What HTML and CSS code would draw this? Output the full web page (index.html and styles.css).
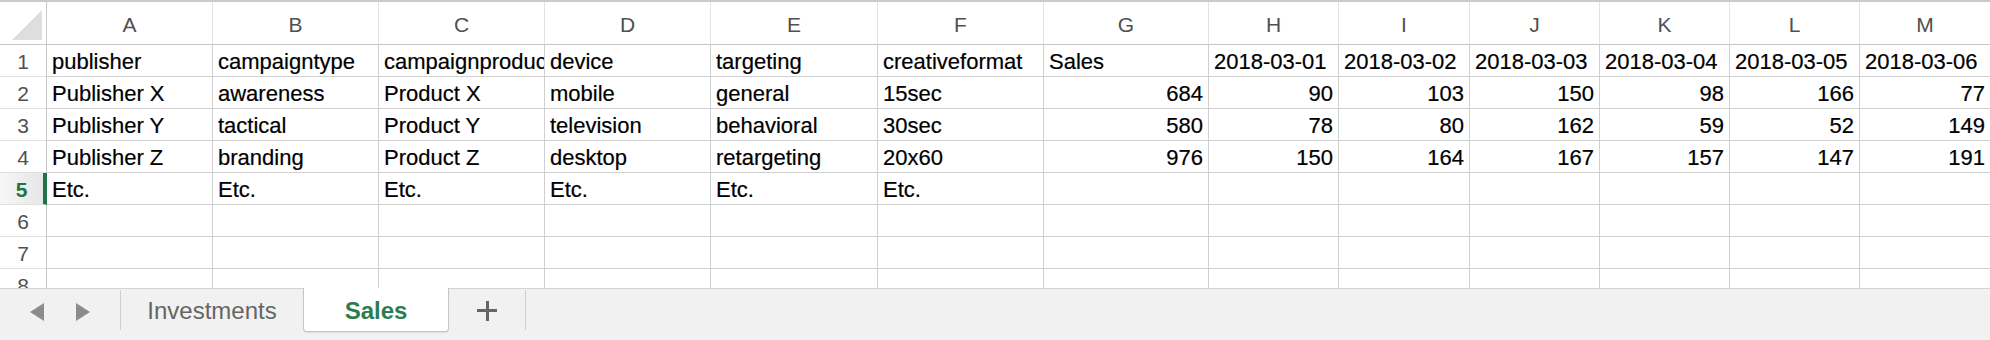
FILE: index.html
```html
<!DOCTYPE html>
<html>
<head>
<meta charset="utf-8">
<link rel="stylesheet" href="styles.css">
</head>
<body>
<div class="app">
  <div class="sheet">
    <div class="grid">
      <div class="corner"><span class="tri"></span></div>
      <div class="ch">A</div><div class="ch">B</div><div class="ch">C</div><div class="ch">D</div><div class="ch">E</div><div class="ch">F</div><div class="ch">G</div><div class="ch">H</div><div class="ch">I</div><div class="ch">J</div><div class="ch">K</div><div class="ch">L</div><div class="ch">M</div>

      <div class="rh">1</div>
      <div class="c">publisher</div><div class="c">campaigntype</div><div class="c">campaignproduct</div><div class="c">device</div><div class="c">targeting</div><div class="c">creativeformat</div><div class="c">Sales</div><div class="c">2018-03-01</div><div class="c">2018-03-02</div><div class="c">2018-03-03</div><div class="c">2018-03-04</div><div class="c">2018-03-05</div><div class="c">2018-03-06</div>

      <div class="rh">2</div>
      <div class="c">Publisher X</div><div class="c">awareness</div><div class="c">Product X</div><div class="c">mobile</div><div class="c">general</div><div class="c">15sec</div><div class="c n">684</div><div class="c n">90</div><div class="c n">103</div><div class="c n">150</div><div class="c n">98</div><div class="c n">166</div><div class="c n">77</div>

      <div class="rh">3</div>
      <div class="c">Publisher Y</div><div class="c">tactical</div><div class="c">Product Y</div><div class="c">television</div><div class="c">behavioral</div><div class="c">30sec</div><div class="c n">580</div><div class="c n">78</div><div class="c n">80</div><div class="c n">162</div><div class="c n">59</div><div class="c n">52</div><div class="c n">149</div>

      <div class="rh">4</div>
      <div class="c">Publisher Z</div><div class="c">branding</div><div class="c">Product Z</div><div class="c">desktop</div><div class="c">retargeting</div><div class="c">20x60</div><div class="c n">976</div><div class="c n">150</div><div class="c n">164</div><div class="c n">167</div><div class="c n">157</div><div class="c n">147</div><div class="c n">191</div>

      <div class="rh sel">5</div>
      <div class="c">Etc.</div><div class="c">Etc.</div><div class="c">Etc.</div><div class="c">Etc.</div><div class="c">Etc.</div><div class="c">Etc.</div><div class="c"></div><div class="c"></div><div class="c"></div><div class="c"></div><div class="c"></div><div class="c"></div><div class="c"></div>

      <div class="rh">6</div>
      <div class="c"></div><div class="c"></div><div class="c"></div><div class="c"></div><div class="c"></div><div class="c"></div><div class="c"></div><div class="c"></div><div class="c"></div><div class="c"></div><div class="c"></div><div class="c"></div><div class="c"></div>

      <div class="rh">7</div>
      <div class="c"></div><div class="c"></div><div class="c"></div><div class="c"></div><div class="c"></div><div class="c"></div><div class="c"></div><div class="c"></div><div class="c"></div><div class="c"></div><div class="c"></div><div class="c"></div><div class="c"></div>

      <div class="rh">8</div>
      <div class="c"></div><div class="c"></div><div class="c"></div><div class="c"></div><div class="c"></div><div class="c"></div><div class="c"></div><div class="c"></div><div class="c"></div><div class="c"></div><div class="c"></div><div class="c"></div><div class="c"></div>
    </div>
  </div>
  <div class="tabbar">
    <div class="nav">
      <span class="arrow left"></span>
      <span class="arrow right"></span>
    </div>
    <div class="sep"></div>
    <div class="tab">Investments</div>
    <div class="tab active">Sales</div>
    <div class="add"><span class="plus"></span></div>
    <div class="sep"></div>
  </div>
</div>
</body>
</html>
```
FILE: styles.css
```css
* { box-sizing: border-box; }
html, body { margin: 0; padding: 0; background: #ffffff; }
body { width: 1990px; height: 340px; overflow: hidden; }

.app { display: flex; flex-direction: column; width: 1990px; height: 340px; }

.sheet {
  height: 288px;
  overflow: hidden;
  border-top: 2px solid #c9c9c9;
}

.grid {
  display: grid;
  grid-template-columns: 47px 166px 166px 166px 166px 167px 166px 165px 130px 131px 130px 130px 130px 131px;
  grid-template-rows: 43px repeat(8, 32px);
  font-family: "Liberation Sans", Arial, sans-serif;
}

.corner {
  position: relative;
  border-right: 1px solid #c8c8c8;
  border-bottom: 1px solid #c8c8c8;
  background: #fff;
}
.tri {
  position: absolute;
  right: 4px;
  bottom: 4px;
  width: 30px;
  height: 30px;
  background: #dedede;
  clip-path: polygon(100% 0, 100% 100%, 0 100%);
}

.ch {
  display: flex;
  align-items: center;
  justify-content: center;
  font-size: 21px;
  color: #505050;
  border-right: 1px solid #e3e3e3;
  border-bottom: 1px solid #c4c4c4;
  padding-top: 3px;
}

.rh {
  display: flex;
  align-items: center;
  justify-content: center;
  font-size: 21px;
  color: #505050;
  border-right: 1px solid #c8c8c8;
  border-bottom: 1px solid #e0e0e0;
  padding-top: 2px;
}
.rh.sel {
  color: #217346;
  font-weight: bold;
  background: linear-gradient(to right, #f7f7f7, #e6e6e6);
  border-right: 4px solid #217346;
}

.c {
  border-right: 1px solid #d0d0d0;
  border-bottom: 1px solid #d0d0d0;
  font-size: 22px;
  line-height: 31px;
  color: #000;
  padding: 1px 5px 0 5px;
  white-space: nowrap;
  overflow: hidden;
  text-overflow: clip;
  -webkit-text-stroke: 0.2px #000;
}
.c.n { text-align: right; }

.tabbar {
  flex: 1;
  display: flex;
  align-items: flex-start;
  background: #f1f1f1;
  border-top: 1px solid #d3d3d3;
  font-family: "Liberation Sans", Arial, sans-serif;
}

.nav {
  width: 120px;
  height: 100%;
  display: flex;
  align-items: center;
  padding-left: 30px;
  gap: 32px;
  padding-bottom: 6px;
}
.arrow {
  width: 0;
  height: 0;
  border-top: 9px solid transparent;
  border-bottom: 9px solid transparent;
}
.arrow.left { border-right: 14px solid #8c8c8c; }
.arrow.right { border-left: 14px solid #8c8c8c; }

.sep {
  width: 1px;
  height: 40px;
  background: #cfcfcf;
  margin-top: 1px;
}

.tab {
  width: 182px;
  height: 43px;
  display: flex;
  align-items: center;
  justify-content: center;
  font-size: 24px;
  color: #656565;
}
.tab.active {
  width: 146px;
  margin-top: -1px;
  height: 44px;
  background: #ffffff;
  color: #2a7d4f;
  font-weight: bold;
  border-left: 1px solid #c6c6c6;
  border-right: 1px solid #c6c6c6;
  border-bottom: 1px solid #c6c6c6;
  border-radius: 0 0 4px 4px;
  box-shadow: 0 1px 1px rgba(0,0,0,0.08);
  padding-top: 2px;
}

.add {
  width: 76px;
  height: 43px;
  display: flex;
  align-items: center;
  justify-content: center;
}
.plus {
  position: relative;
  width: 20px;
  height: 20px;
  background:
    linear-gradient(#666, #666) center / 20px 3px no-repeat,
    linear-gradient(#666, #666) center / 3px 20px no-repeat;
}
```
